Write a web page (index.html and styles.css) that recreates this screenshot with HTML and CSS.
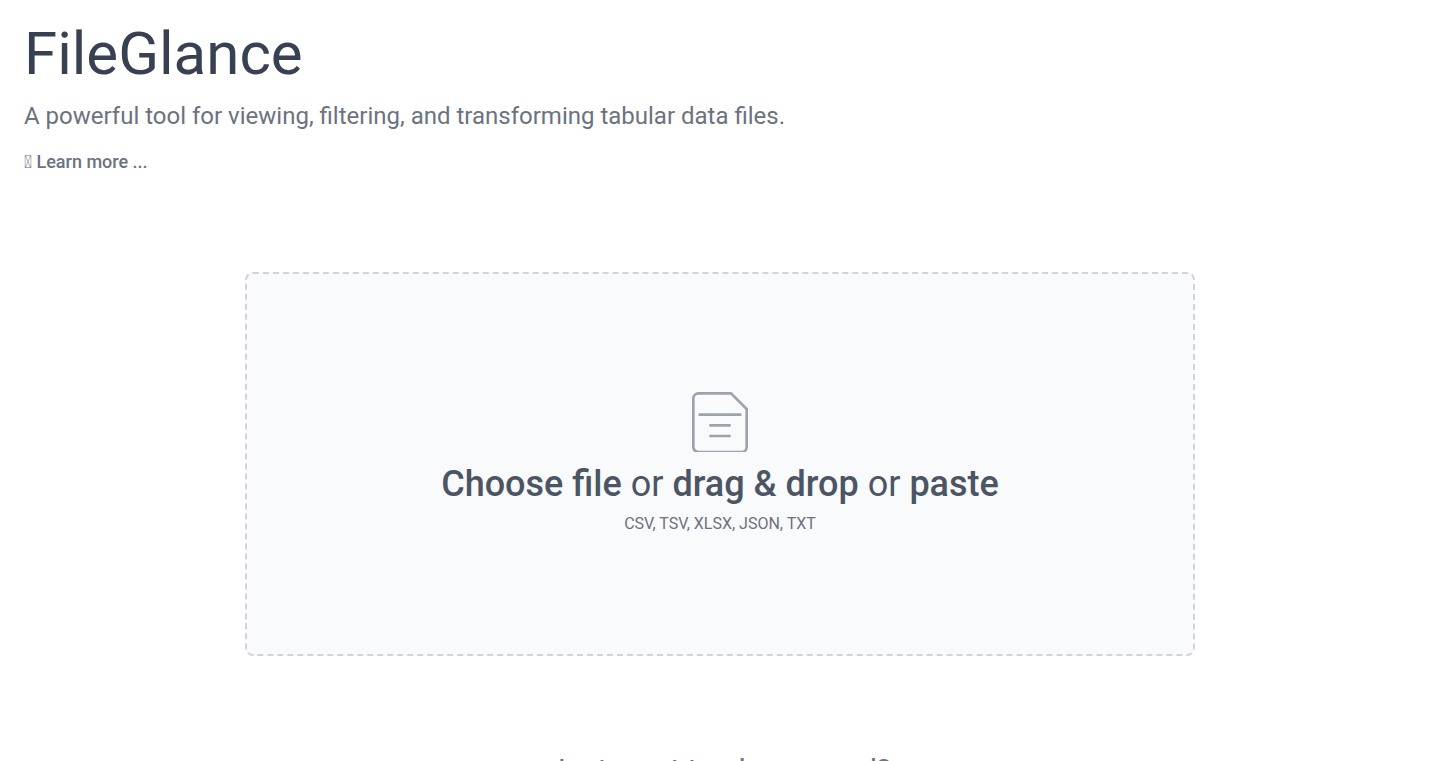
FILE: index.html
```
<!DOCTYPE html>
<html lang="en">
<head>
  <meta charset="UTF-8">
  <meta name="viewport" content="width=device-width, initial-scale=1">
  <title>FileGlance</title>
  <link rel="stylesheet" href="styles.css">
</head>
<body>
  <header class="header">
    <h1>FileGlance</h1>
    <p class="tagline">A powerful tool for viewing, filtering, and transforming tabular data files.</p>
    <button type="button" class="learn-more">&#xE000; Learn more ...</button>
  </header>

  <main class="main">
    <button type="button" class="dropzone">
      <svg class="file-icon" viewBox="0 0 56 60" fill="none" stroke="currentColor" stroke-width="2.67" aria-hidden="true">
        <path d="M39 1.4H6.5a5.2 5.2 0 0 0-5.2 5.2v48.2a5.2 5.2 0 0 0 5.2 5.2h43a5.2 5.2 0 0 0 5.2-5.2V17z"/>
        <path d="M6.6 22.6h42.8M17.3 33.3h21.4M17.3 44h21.4"/>
      </svg>
      <span class="dropzone-title"><b>Choose file</b> or <b>drag &amp; drop</b> or <b>paste</b></span>
      <span class="dropzone-types">CSV, TSV, XLSX, JSON, TXT</span>
    </button>

    <h2 class="samples-title">Just want to play around?</h2>
  </main>
</body>
</html>
```
FILE: styles.css
```
body {
  margin: 0;
  font-family: Roboto, sans-serif;
  color: #6b7280;
  background: white;
  overflow-x: hidden;
}

body::-webkit-scrollbar {
  display: none;
}

.header {
  padding: 24px;
}

.header h1 {
  margin: 0;
  font-size: 60px;
  line-height: 60px;
  font-weight: 400;
  color: #374151;
}

.tagline {
  margin: 16px 0;
  font-size: 24px;
  line-height: 32px;
}

.learn-more {
  display: block;
  padding: 0;
  border: none;
  background: none;
  font-family: inherit;
  font-size: 18px;
  line-height: 28px;
  font-weight: 500;
  color: inherit;
  cursor: pointer;
}

.main {
  display: flex;
  flex-direction: column;
  align-items: center;
  padding: 72px 24px 96px;
}

.dropzone {
  display: flex;
  flex-direction: column;
  align-items: center;
  box-sizing: border-box;
  width: 100%;
  max-width: 950px;
  padding: 118px 24px;
  border: 2px dashed #d1d5db;
  border-radius: 8px;
  background: #f9fafb;
  font-family: inherit;
  color: #6b7280;
  cursor: pointer;
}

.file-icon {
  width: 56px;
  height: 60px;
  margin-bottom: 12px;
  overflow: hidden;
  color: #9ca3af;
}

.dropzone-title {
  font-size: 36px;
  line-height: 40px;
  color: #4b5563;
}

.dropzone-title b {
  font-weight: 500;
}

.dropzone-types {
  margin-top: 8px;
  font-size: 16px;
  line-height: 24px;
}

.samples-title {
  margin: 96px 0 0;
  font-size: 30px;
  line-height: 36px;
  font-weight: 400;
}
```
